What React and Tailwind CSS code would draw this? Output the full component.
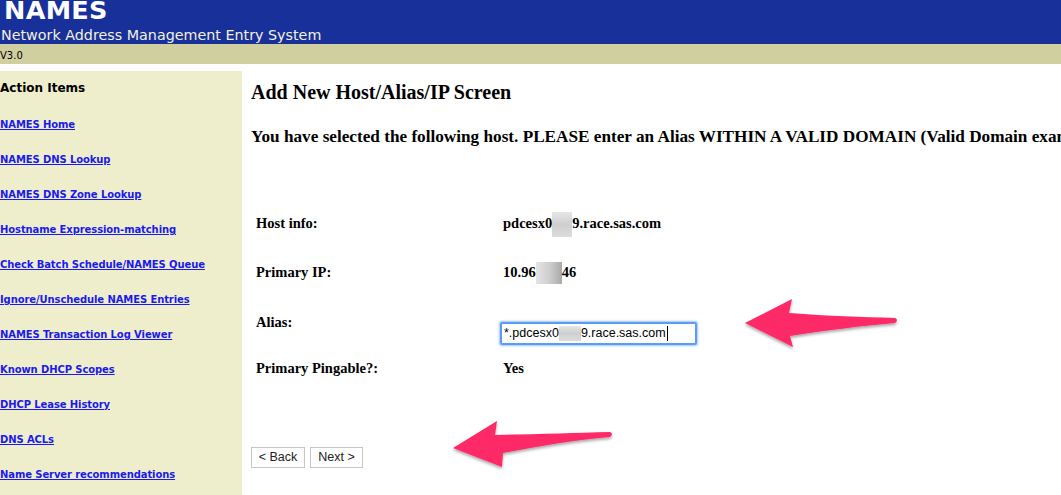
import React from 'react';

const links = [
  'NAMES Home',
  'NAMES DNS Lookup',
  'NAMES DNS Zone Lookup',
  'Hostname Expression-matching',
  'Check Batch Schedule/NAMES Queue',
  'Ignore/Unschedule NAMES Entries',
  'NAMES Transaction Log Viewer',
  'Known DHCP Scopes',
  'DHCP Lease History',
  'DNS ACLs',
  'Name Server recommendations',
];

const verdana = { fontFamily: '"DejaVu Sans", Verdana, sans-serif' };

// pixelated redaction block
const Blur = ({ w, h, dark }) => (
  <span
    className={`inline-block align-middle ${dark ? 'bg-gradient-to-r from-[#e4e4e4] via-[#cfcfcf] to-[#a9a9a9]' : 'bg-gradient-to-b from-[#e6e6e6] via-[#cfcfcf] to-[#dcdcdc]'}`}
    style={{ width: w, height: h }}
  />
);

const Arrow = ({ points, className }) => (
  <svg className={className} width="1061" height="495" viewBox="0 0 1061 495">
    <defs>
      <filter id="sh" x="-20%" y="-20%" width="140%" height="160%">
        <feDropShadow dx="0" dy="2" stdDeviation="1.5" floodColor="#000" floodOpacity="0.35" />
      </filter>
    </defs>
    <path d={points} fill="#fe2a68" filter="url(#sh)" strokeLinejoin="round" />
  </svg>
);

export default function App() {
  return (
    <div className="relative w-[1061px] h-[495px] overflow-hidden bg-white">
      {/* Header */}
      <div className="h-[44px] bg-[#18309a] pl-[4px] text-white" style={verdana}>
        <div className="text-[25.5px] font-bold leading-[21px] tracking-[0.3px]">NAMES</div>
        <div className="text-[14.3px] leading-[20px] mt-[4px] -ml-[3px] text-[#f3f1dc]">
          Network Address Management Entry System
        </div>
      </div>
      <div className="h-[20px] bg-[#d0cf9f] text-[10px] leading-[23px] text-black" style={verdana}>
        V3.0
      </div>

      <div className="flex mt-[7px]">
        {/* Sidebar */}
        <div className="w-[242px] h-[425px] shrink-0 bg-[#efeecc] pt-[10px]" style={verdana}>
          <div className="text-[12px] font-bold leading-[14px] text-black">Action Items</div>
          <ul className="mt-[23px] flex flex-col gap-[21px]">
            {links.map((l) => (
              <li key={l} className="text-[10px] leading-[14px] h-[14px]">
                <a href="#" className="font-bold text-[#1a1aee] underline tracking-[-0.1px]">
                  {l}
                </a>
              </li>
            ))}
          </ul>
        </div>

        {/* Main */}
        <div className="flex-1 pl-[9px] whitespace-nowrap text-black" style={{ fontFamily: '"Liberation Serif", "Times New Roman", serif' }}>
          <h3 className="text-[20px] font-bold leading-[24px] mt-[9px]">Add New Host/Alias/IP Screen</h3>
          <p className="text-[17.2px] font-bold leading-[20px] mt-[23px]">
            You have selected the following host. PLEASE enter an Alias WITHIN A VALID DOMAIN (Valid Domain examples)
          </p>

          <div className="mt-[67px] pl-[5px] text-[14.5px] font-bold">
            <div className="flex items-center h-[20px]">
              <div className="w-[247px]">Host info:</div>
              <div className="flex items-center">
                pdcesx0<Blur w={20} h={25} />9.race.sas.com
              </div>
            </div>
            <div className="flex items-center h-[20px] mt-[29px]">
              <div className="w-[247px]">Primary IP:</div>
              <div className="flex items-center">
                10.96<Blur w={26} h={22} dark />46
              </div>
            </div>
            <div className="flex items-start h-[20px] mt-[29px]">
              <div className="w-[244px] leading-[20px]">Alias:</div>
              <div className="shrink-0 mt-[10px] w-[197px] h-[23px] border-[2px] border-[#5b9cf4] rounded-[2px] shadow-[0_0_2px_1px_rgba(91,156,244,0.6)] flex items-center pl-[2px] text-[12.5px] font-normal" style={{ fontFamily: '"Liberation Sans", Arial, sans-serif' }}>
                *.pdcesx0<Blur w={22} h={15} />9.race.sas.com<span className="inline-block w-px h-[15px] bg-black ml-px" />
              </div>
            </div>
            <div className="flex items-center h-[20px] mt-[27px]">
              <div className="w-[247px]">Primary Pingable?:</div>
              <div>Yes</div>
            </div>
          </div>

          <div className="flex gap-[5px] mt-[68px]" style={{ fontFamily: '"Liberation Sans", Arial, sans-serif' }}>
            <button className="w-[54px] h-[21px] border border-[#c6c6c6] bg-white text-[12.5px] text-[#222]">&lt; Back</button>
            <button className="w-[53px] h-[21px] border border-[#c6c6c6] bg-white text-[12.5px] text-[#222]">Next &gt;</button>
          </div>
        </div>
      </div>

      {/* Annotation arrows */}
      <Arrow
        className="absolute left-0 top-0 pointer-events-none"
        points="M745 323 L792 299 L789 313 C830 316 860 317 895 318 Q899 320 895 323 C860 326 830 330 790 336 L793 347 Z"
      />
      <Arrow
        className="absolute left-0 top-0 pointer-events-none"
        points="M453 448 L497 421 L495 435 C540 434 575 433 610 432 Q614 434 610 437 C575 440 540 446 503 453 L502 467 Z"
      />
    </div>
  );
}
